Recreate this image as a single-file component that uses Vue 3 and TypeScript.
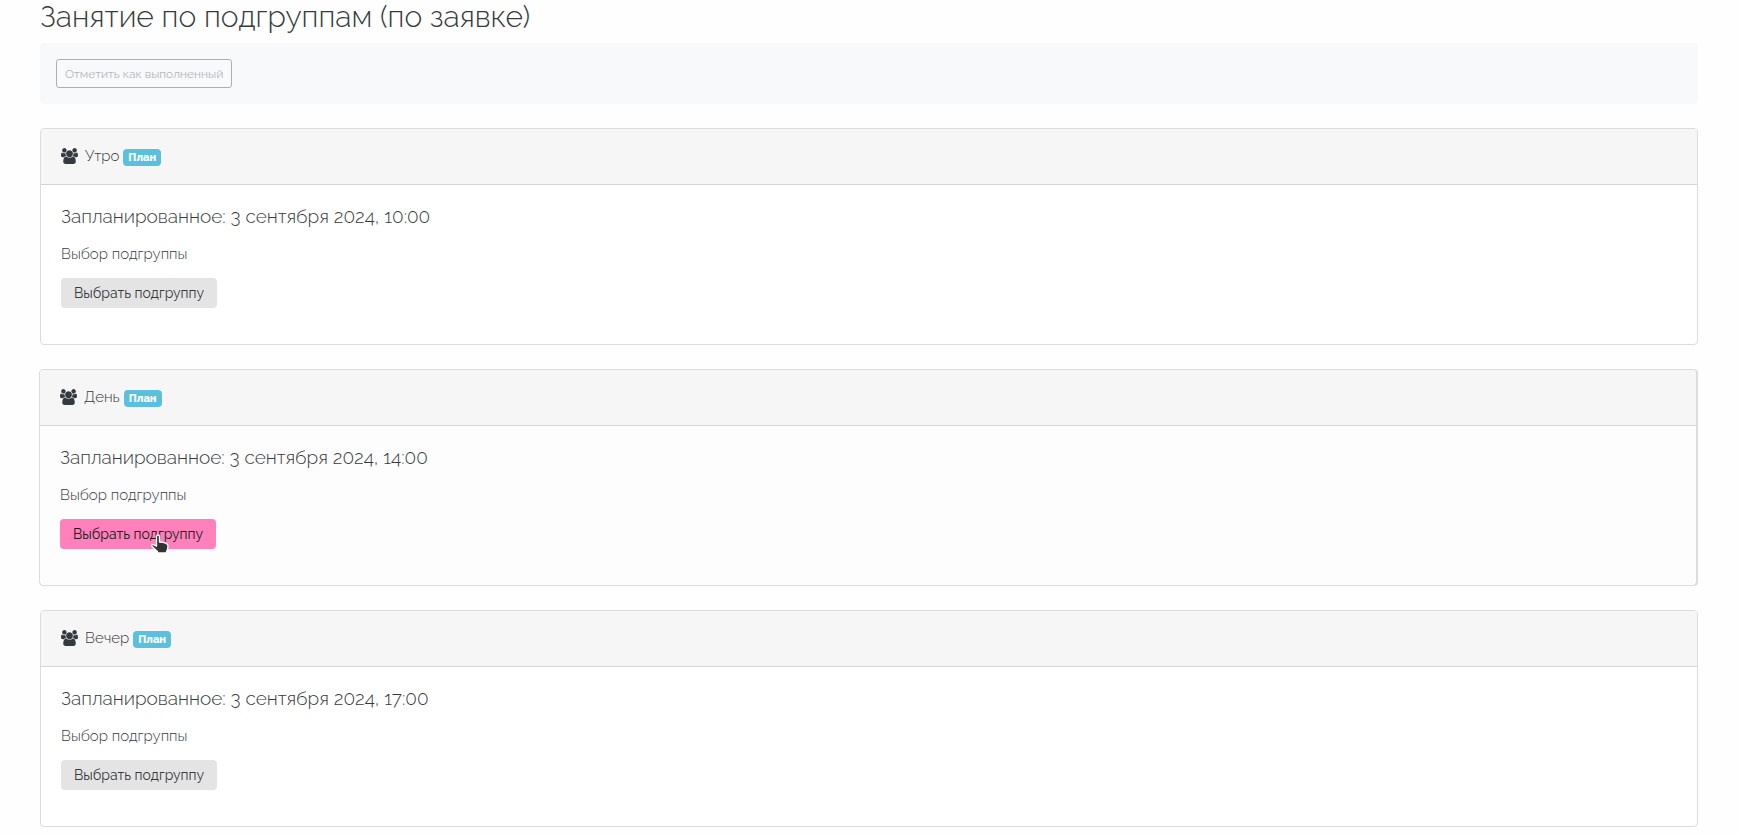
<script setup lang="ts">
import { ref } from 'vue'

interface Session {
  id: string
  name: string
  status: string
  date: string
  active: boolean
}

const sessions = ref<Session[]>([
  { id: 'morning', name: 'Утро', status: 'План', date: '3 сентября 2024, 10:00', active: false },
  { id: 'day', name: 'День', status: 'План', date: '3 сентября 2024, 14:00', active: true },
  { id: 'evening', name: 'Вечер', status: 'План', date: '3 сентября 2024, 17:00', active: false },
])
</script>

<template>
  <main class="page">
    <h1 class="title">Занятие по подгруппам (по заявке)</h1>

    <div class="toolbar">
      <button type="button" class="complete" disabled>Отметить как выполненный</button>
    </div>

    <section
      v-for="session in sessions"
      :key="session.id"
      class="card"
      :class="{ active: session.active }"
      :aria-labelledby="session.id"
    >
      <header class="card-header">
        <svg class="group-icon" viewBox="0 0 1920 1792" aria-hidden="true">
          <path d="M593 896q-162 5-265 128H194q-82 0-138-40.500T0 865q0-353 124-353 6 0 43.500 21t97.500 42.500T384 597q67 0 133-23-5 37-5 66 0 139 81 256zm1071 637q0 120-73 189.500t-194 69.500H523q-121 0-194-69.500T256 1533q0-53 3.500-103.500t14-109T300 1212t43-97.500 62-81 85.500-53.500T602 960q10 0 43 21.500t73 48 107 48 135 21.500 135-21.500 107-48 73-48 43-21.500q61 0 111.500 20t85.500 53.500 62 81 43 97.500 26.500 108.500 14 109 3.500 103.500zM640 256q0 106-75 181t-181 75-181-75-75-181 75-181T384 0t181 75 75 181zm704 384q0 159-112.500 271.500T960 1024 688.500 911.500 576 640t112.500-271.500T960 256t271.500 112.500T1344 640zm576 225q0 78-56 118.500t-138 40.500h-134q-103-123-265-128 81-117 81-256 0-29-5-66 66 23 133 23 59 0 119-21.500t97.500-42.500 43.500-21q124 0 124 353zm-128-609q0 106-75 181t-181 75-181-75-75-181 75-181 181-75 181 75 75 181z" />
        </svg>
        <h2 :id="session.id" class="name">{{ session.name }}</h2>
        <span class="badge">{{ session.status }}</span>
      </header>
      <div class="card-body">
        <h3 class="date">Запланированное: {{ session.date }}</h3>
        <p class="caption">Выбор подгруппы</p>
        <div class="action">
          <button type="button" class="choose">Выбрать подгруппу</button>
          <svg v-if="session.active" class="pointer" viewBox="0 0 20 22" aria-hidden="true">
            <path
              d="M6.500 2.500c0-2 3-2 3 0V8c4 .2 8.500.8 8.500 4 0 3-.5 4-1.500 5.500V19H7.500v-1.500L2 12.500c-1-1.500.6-2.500 2-1.600l2.500 1.400z"
              fill="#333"
              stroke="#fff"
              stroke-width="1.300"
              stroke-linejoin="round"
            />
          </svg>
        </div>
      </div>
    </section>
  </main>
</template>

<style>
body {
  margin: 0;
  background: #fefefe;
}
</style>

<style scoped>
.page {
  padding: 0 43px 8px 40px;
  font-family: Raleway, Lato, "Open Sans", sans-serif;
  font-weight: 300;
  color: #373a3c;
}

.title {
  margin: 0 0 10px;
  font-size: 30px;
  line-height: 33px;
  font-weight: 300;
}

.toolbar {
  display: flex;
  margin-bottom: 24px;
  padding: 16px;
  border-radius: 4px;
  background: #f8f9fb;
}

.complete {
  height: 29px;
  padding: 0 8px;
  border: 1px solid #adb0b3;
  border-radius: 3px;
  background: transparent;
  color: #b4b7b9;
  font: inherit;
  font-size: 12px;
  font-weight: 400;
}

.card {
  margin-bottom: 24px;
  border: 1px solid #dcdcdc;
  border-radius: 4px;
  background: #fff;
}

.card:last-child {
  margin-bottom: 0;
}

.card.active {
  margin-right: 1px;
  margin-left: -1px;
  background: #fdfdfd;
  box-shadow: 2px 0 0 -1px #dcdcdc, 1px 0 0 #dcdcdc;
}

.card-header {
  display: flex;
  align-items: center;
  height: 53px;
  padding: 0 20px 2px;
  border-bottom: 1px solid #d5d5d5;
  border-radius: 3px 3px 0 0;
  background: #f6f6f6;
}

.group-icon {
  width: 17px;
  height: 16px;
  margin-right: 7px;
  fill: #343a40;
}

.name {
  margin: 0 4px 0 0;
  font-size: 15px;
  line-height: 24px;
  font-weight: 300;
}

.badge {
  margin-top: 4px;
  padding: 0 5px;
  border-radius: 4px;
  background: #5bc0de;
  color: #fff;
  font-size: 11px;
  line-height: 17px;
  font-weight: 800;
}

.card-body {
  padding: 20px 20px 36px;
}

.date {
  margin: 0 0 15px;
  font-size: 19px;
  line-height: 22px;
  font-weight: 300;
}

.caption {
  margin: 0 0 11px;
  font-size: 15px;
  line-height: 25px;
}

.action {
  position: relative;
  display: flex;
}

.choose {
  height: 30px;
  padding: 0 13px;
  border: 0;
  border-radius: 4px;
  background: #e4e4e4;
  color: #373a3c;
  font: inherit;
  font-size: 14px;
  font-weight: 400;
}

.active .choose {
  background: #ff80bb;
  color: #16181a;
}

.pointer {
  position: absolute;
  top: 15px;
  left: 90px;
  width: 20px;
  height: 22px;
}
</style>
